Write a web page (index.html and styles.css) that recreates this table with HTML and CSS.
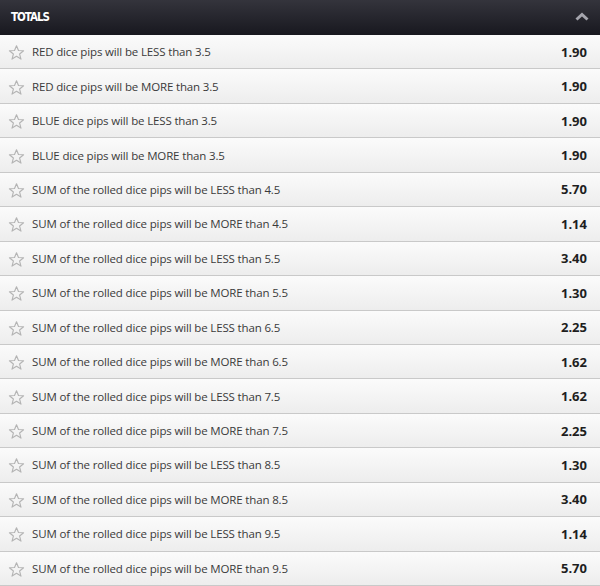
FILE: index.html
```html
<!DOCTYPE html>
<html lang="en">
<head>
    <meta charset="UTF-8">
    <title>Totals</title>
    <link rel="stylesheet" href="styles.css">
</head>
<body>
    <div class="market">
        <div class="market-head">
            <span class="market-title">TOTALS</span>
            <svg class="chevron" width="14" height="9" viewBox="0 0 14 9"><path d="M1.5 7.5 L7 2.5 L12.5 7.5" fill="none" stroke="#a5a5ad" stroke-width="3"/></svg>
        </div>
        <div class="rows" id="rows"></div>
    </div>

    <script>
        const bets = [
            ['RED dice pips will be LESS than 3.5', '1.90'],
            ['RED dice pips will be MORE than 3.5', '1.90'],
            ['BLUE dice pips will be LESS than 3.5', '1.90'],
            ['BLUE dice pips will be MORE than 3.5', '1.90'],
            ['SUM of the rolled dice pips will be LESS than 4.5', '5.70'],
            ['SUM of the rolled dice pips will be MORE than 4.5', '1.14'],
            ['SUM of the rolled dice pips will be LESS than 5.5', '3.40'],
            ['SUM of the rolled dice pips will be MORE than 5.5', '1.30'],
            ['SUM of the rolled dice pips will be LESS than 6.5', '2.25'],
            ['SUM of the rolled dice pips will be MORE than 6.5', '1.62'],
            ['SUM of the rolled dice pips will be LESS than 7.5', '1.62'],
            ['SUM of the rolled dice pips will be MORE than 7.5', '2.25'],
            ['SUM of the rolled dice pips will be LESS than 8.5', '1.30'],
            ['SUM of the rolled dice pips will be MORE than 8.5', '3.40'],
            ['SUM of the rolled dice pips will be LESS than 9.5', '1.14'],
            ['SUM of the rolled dice pips will be MORE than 9.5', '5.70']
        ];

        const star = '<svg class="star" width="17" height="17" viewBox="0 0 24 24"><path d="M12 2.5 L14.8 9.2 L22 9.6 L16.4 14.2 L18.3 21.3 L12 17.3 L5.7 21.3 L7.6 14.2 L2 9.6 L9.2 9.2 Z" fill="none" stroke="#b4b4b4" stroke-width="1.6" stroke-linejoin="round"/></svg>';

        const rowsDiv = document.getElementById('rows');
        bets.forEach(bet => {
            const row = document.createElement('div');
            row.className = 'row';
            row.innerHTML = `${star}<span class="label">${bet[0]}</span><span class="odds">${bet[1]}</span>`;
            rowsDiv.appendChild(row);
        });
    </script>
</body>
</html>
```

FILE: styles.css
```css
body {
    margin: 0;
    padding: 0;
    background: #ffffff;
    font-family: 'Open Sans', sans-serif;
}

.market {
    width: 600px;
}

.market-head {
    height: 35px;
    display: flex;
    align-items: center;
    justify-content: space-between;
    padding: 0 11px 0 11px;
    box-sizing: border-box;
    background: linear-gradient(to bottom, #34343c, #18181f);
}

.market-title {
    color: #ffffff;
    font-family: 'DejaVu Sans Condensed', 'DejaVu Sans', sans-serif;
    font-weight: bold;
    font-size: 11.5px;
    letter-spacing: -1px;
    margin-top: -1px;
}

.chevron {
    margin-top: -3px;
}

.row {
    height: 33.45px;
    display: flex;
    align-items: center;
    padding: 0 13px 0 8px;
    border-bottom: 1px solid #c9c9c9;
    background: linear-gradient(to bottom, #fbfbfb, #ededed);
}

.star {
    margin-right: 7px;
    margin-top: 2px;
    flex-shrink: 0;
}

.label {
    flex-grow: 1;
    font-size: 11.5px;
    letter-spacing: -0.15px;
    color: #3a3a3a;
}

.odds {
    font-size: 13px;
    font-weight: bold;
    color: #1e1e1e;
}
```
